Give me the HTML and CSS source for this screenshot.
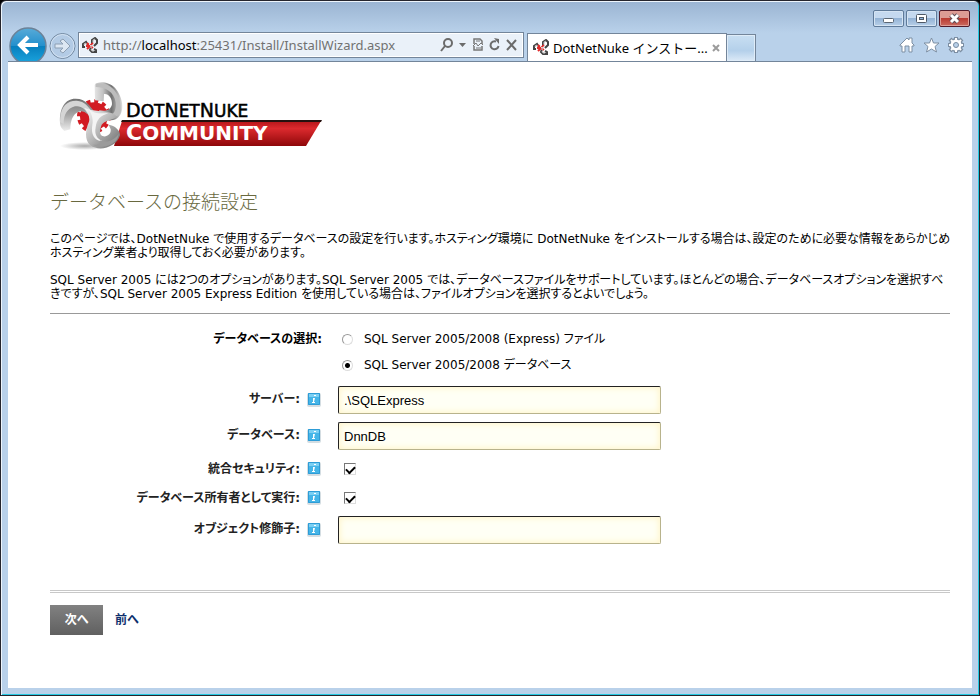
FILE: index.html
```html
<!DOCTYPE html>
<html lang="ja">
<head>
<meta charset="utf-8">
<title>DotNetNuke インストール</title>
<link rel="stylesheet" href="styles.css">
</head>
<body>
<svg class="defs" aria-hidden="true">
  <defs>
    <symbol id="favicon" viewBox="0 0 17 17">
      <path d="M10 7V3L13 1L15 3V6L12 9M6 8L4 5L1 7V10H3M9 10L8 13L10 15H14V13L12 12" fill="none" stroke="#444" stroke-width="2"/>
      <path d="M11 6V3L13 2M5 7L3 6L2 8M9 12L10 14H12" fill="none" stroke="#c4c4c4"/>
      <path d="M5 6L8 9L11 6M5 12L8 9L11 11M4 9H7" stroke="#e22a2a" stroke-width="2" fill="none"/>
      <path d="M7 7L9 9V11M9 9L12 7" stroke="#ddd" fill="none"/>
    </symbol>
    <symbol id="info" viewBox="0 0 14 15">
      <rect y="1" width="14" height="14" rx="2" fill="#d4dde2"/>
      <rect x="1" y="1" width="12" height="12" rx="1" fill="#45b5e8"/>
      <path d="M1 2H13V5H1Z" fill="#7bcff3"/>
      <path d="M1.500 1.500H12.500V12.500H1.500Z" fill="none" stroke="#2e9cd6"/>
      <path d="M7 3H9V4H7ZM6 6H8L7 10H8V11H5V10H6L6 7Z" fill="#fff"/>
    </symbol>
  </defs>
</svg>
<div class="window">
  <header class="chrome">
    <div class="caption">
      <button class="cap" aria-label="最小化"><svg width="29" height="15" viewBox="0 0 29 15"><rect x="9.500" y="7.500" width="10" height="4" rx="1" fill="#fff" stroke="#5b6673"/></svg></button>
      <button class="cap" aria-label="最大化"><svg width="29" height="15" viewBox="0 0 29 15"><rect x="9.500" y="3.500" width="10" height="8" rx="1" fill="#fff" stroke="#4f5966"/><rect x="12.500" y="6.500" width="4" height="2" fill="#8fb4dc" stroke="#4f5966"/></svg></button>
      <button class="cap close" aria-label="閉じる"><svg width="29" height="15" viewBox="0 0 29 15"><path d="M11 4L18 11M18 4L11 11" stroke="#5d4d56" stroke-width="5"/><path d="M11 4L18 11M18 4L11 11" stroke="#fff" stroke-width="3"/></svg></button>
    </div>
    <div class="toolbar">
      <button class="nav" aria-label="戻る"><svg width="38" height="34" viewBox="0 0 38 34"><defs><linearGradient id="back" x2="0" y2="1"><stop stop-color="#58abd8"/><stop offset=".5" stop-color="#238fcc"/><stop offset=".51" stop-color="#077fbe"/><stop offset="1" stop-color="#1ca6df"/></linearGradient></defs><circle cx="19" cy="19" r="18" fill="url(#back)" stroke="#6c8298" stroke-width="1.500"/><path d="M29 18H11M19 10L11 18L19 26" fill="none" stroke="#fff" stroke-width="4"/></svg></button>
      <button class="nav forward" aria-label="進む"><svg width="27" height="28" viewBox="0 0 27 28"><circle cx="13.500" cy="14" r="12.500" fill="#b3cbe5" stroke="#71879f"/><circle cx="13.500" cy="14" r="11.500" fill="none" stroke="#d4e3f3"/><path d="M6 12H14L11 9L14 7L21 14L14 21L11 19L14 16H6Z" fill="#dce7f3" stroke="#8d9fb3"/></svg></button>
      <div class="address">
        <svg width="17" height="17"><use href="#favicon"/></svg>
        <a class="url" href="#">http://<b>localhost</b>:25431/Install/InstallWizard.aspx</a>
        <button class="tool" aria-label="検索"><svg width="28" height="16" viewBox="0 0 28 16"><circle cx="9" cy="6" r="4" fill="none" stroke="#6b6b6b" stroke-width="2"/><path d="M6 9L2 14" stroke="#6b6b6b" stroke-width="2"/><path d="M20 6H27L23.500 10Z" fill="#6b6b6b"/></svg></button>
        <button class="tool" aria-label="互換表示"><svg width="10" height="14" viewBox="0 0 10 14"><path d="M1 6V1H7L9 3V6M1 8V12H9V8" fill="none" stroke="#777" stroke-width="1.500"/><path d="M0 8L3 5L5 8L8 5L10 7M3 3H7M3 10H8" fill="none" stroke="#777"/></svg></button>
        <button class="tool" aria-label="更新"><svg width="11" height="14" viewBox="0 0 11 14"><path d="M7 3.500A4 4 0 1 0 9.500 8" fill="none" stroke="#6b6b6b" stroke-width="2"/><path d="M5 0L10 1V6Z" fill="#6b6b6b"/></svg></button>
        <button class="tool" aria-label="中止"><svg width="11" height="14" viewBox="0 0 11 14"><path d="M1 2L10 12M10 2L1 12" stroke="#6b6b6b" stroke-width="2"/></svg></button>
      </div>
      <div class="tab">
        <svg width="17" height="17"><use href="#favicon"/></svg>
        <span class="tab-title">DotNetNuke インストー...</span>
        <button class="tool" aria-label="タブを閉じる"><svg width="8" height="8" viewBox="0 0 8 8"><path d="M1 1L7 7M7 1L1 7" stroke="#9b9b9b" stroke-width="2"/></svg></button>
      </div>
      <button class="newtab" aria-label="新しいタブ"></button>
      <div class="commands">
        <button class="tool" aria-label="ホーム"><svg width="16" height="16" viewBox="0 0 16 16"><path d="M1 8L8 1L10 3V1H13V6L15 8V9H13V15H10V9H6V15H3V9H1Z" fill="#fff" stroke="#7d8fa3"/></svg></button>
        <button class="tool" aria-label="お気に入り"><svg width="17" height="16" viewBox="0 0 17 16"><path d="M8.500 1L10.500 6H16L12 9.500L13.500 15L8.500 12L3.500 15L5 9.500L1 6H6.500Z" fill="#fff" stroke="#7d8fa3"/></svg></button>
        <button class="tool" aria-label="ツール"><svg width="16" height="16" viewBox="0 0 16 16"><path d="M8 0V16M0 8H16M2 2L14 14M14 2L2 14" stroke="#7d8fa3" stroke-width="4"/><circle cx="8" cy="8" r="5" fill="none" stroke="#7d8fa3" stroke-width="4"/><path d="M8 1V15M1 8H15M3 3L13 13M13 3L3 13" stroke="#fff" stroke-width="2"/><circle cx="8" cy="8" r="4" fill="#b9d1ea" stroke="#fff" stroke-width="3"/><circle cx="8" cy="8" r="2.500" fill="#b9d1ea" stroke="#7d8fa3"/></svg></button>
      </div>
    </div>
  </header>
  <main class="page">
    <svg class="logo" width="275" height="72" viewBox="8 9 275 72" role="img" aria-label="DotNetNuke Community">
      <defs>
        <linearGradient id="band" x2="0" y2="1"><stop stop-color="#b51519"/><stop offset=".3" stop-color="#dc2a2e"/><stop offset="1" stop-color="#8e0709"/></linearGradient>
        <linearGradient id="metal-top" x2="1"><stop stop-color="#e4e4e4"/><stop offset=".3" stop-color="#c2c2c2"/><stop offset=".6" stop-color="#707070"/><stop offset="1" stop-color="#dedede"/></linearGradient>
        <linearGradient id="metal-left" x2="0" y2="1"><stop stop-color="#707070"/><stop offset=".5" stop-color="#a5a5a5"/><stop offset="1" stop-color="#eee"/></linearGradient>
        <linearGradient id="metal-bottom" x2="1" y2="1"><stop stop-color="#fafafa"/><stop offset=".5" stop-color="#b5b5b5"/><stop offset="1" stop-color="#686868"/></linearGradient>
        <radialGradient id="shade"><stop stop-color="#aaa"/><stop offset="1" stop-color="#fff"/></radialGradient>
      </defs>
      <ellipse cx="35" cy="75" rx="25" ry="4" fill="url(#shade)"/>
      <path d="M72 50H271L256 75H64Z" fill="url(#band)"/>
      <path d="M72 49H272L271 51H71Z" fill="#26110f"/>
      <g transform="translate(6 8) scale(.3333)">
        <circle cx="114" cy="112" r="42" fill="#d21b22"/>
        <circle cx="114" cy="112" r="45" fill="none" stroke="#d21b22" stroke-width="12" stroke-dasharray="12 11.500"/>
        <path d="M117 64L116 18C122 6 158 6 178 28C201 54 207 98 187 115C174 130 148 122 125 114L130 94C152 99 165 91 168 76C169 57 157 43 144 45L143 67Z" fill="url(#metal-top)"/>
        <path d="M119 14C165 4 197 48 194 95C193 110 178 117 154 115C175 108 182 90 179 70C174 38 148 24 119 24Z" fill="#bdbdbd"/>
        <path d="M12 132C9 86 29 58 59 59C91 59 102 83 112 94L105 116C93 103 81 92 66 99C49 107 43 128 43 151L25 156C16 148 12 141 12 132Z" fill="url(#metal-left)"/>
        <path d="M13 116C15 82 35 64 62 65C87 66 97 84 109 99L102 113C87 89 76 79 57 82C34 88 23 106 23 135L12 130Z" fill="#d5d5d5"/>
        <path d="M105 93L128 96C142 100 169 96 183 113C167 125 148 123 137 137C130 157 130 169 142 172C155 174 166 164 164 151L158 137C177 139 193 155 192 169C182 204 132 220 103 199C87 187 86 157 99 128C103 113 94 99 85 87Z" fill="url(#metal-bottom)"/>
        <path d="M95 86C109 105 129 103 157 103C134 110 122 121 119 145C115 166 122 179 139 186C115 187 104 165 109 137C113 120 105 99 95 86Z" fill="#f4f4f4"/>
        <path d="M133 184C151 194 179 181 188 164C187 184 171 196 150 202C136 205 120 203 111 197C122 199 135 196 133 184Z" fill="#9b9b9b"/>
      </g>
      <text class="brand" x="76" y="46">D<tspan class="brand-small">OT</tspan>N<tspan class="brand-small">ET</tspan>N<tspan class="brand-small">UKE</tspan></text>
      <text class="edition" x="76" y="69">C<tspan class="edition-small">OMMUNITY</tspan></text>
    </svg>
    <h1>データベースの接続設定</h1>
    <p>このページでは、DotNetNuke で使用するデータベースの設定を行います。ホスティング環境に DotNetNuke をインストールする場合は、設定のために必要な情報をあらかじめ<br>ホスティング業者より取得しておく必要があります。</p>
    <p>SQL Server 2005 には2つのオプションがあります。SQL Server 2005 では、データベースファイルをサポートしています。ほとんどの場合、データベースオプションを選択すべ<br>きですが、SQL Server 2005 Express Edition を使用している場合は、ファイルオプションを選択するとよいでしょう。</p>
    <form>
      <div class="row options" role="radiogroup" aria-labelledby="kind">
        <span class="caption-label" id="kind">データベースの選択:</span>
        <div class="choices">
          <label class="choice"><input type="radio" name="kind">SQL Server 2005/2008 (Express) ファイル</label>
          <label class="choice"><input type="radio" name="kind" checked>SQL Server 2005/2008 データベース</label>
        </div>
      </div>
      <div class="row field"><label for="server">サーバー:<svg width="14" height="15"><use href="#info"/></svg></label><input type="text" id="server" value=".\SQLExpress"></div>
      <div class="row field"><label for="db">データベース:<svg width="14" height="15"><use href="#info"/></svg></label><input type="text" id="db" value="DnnDB"></div>
      <div class="row check"><label for="security">統合セキュリティ:<svg width="14" height="15"><use href="#info"/></svg></label><input type="checkbox" id="security" checked></div>
      <div class="row check"><label for="owner">データベース所有者として実行:<svg width="14" height="15"><use href="#info"/></svg></label><input type="checkbox" id="owner" checked></div>
      <div class="row field"><label for="qualifier">オブジェクト修飾子:<svg width="14" height="15"><use href="#info"/></svg></label><input type="text" id="qualifier"></div>
      <div class="actions">
        <button type="button" class="next">次へ</button>
        <a class="prev" href="#">前へ</a>
      </div>
    </form>
  </main>
</div>
</body>
</html>
```

FILE: styles.css
```css
* { box-sizing: border-box; }

body {
  margin: 0;
  background: #000;
  color: #000;
  font: 12px/14px "DejaVu Sans", "Noto Sans CJK JP", sans-serif;
  font-feature-settings: "palt";
}

button {
  margin: 0;
  padding: 0;
  border: 0;
  background: none;
  font: inherit;
}

svg { display: block; flex: none; }
.defs { position: absolute; width: 0; height: 0; }

.window {
  display: flex;
  flex-direction: column;
  min-height: 100vh;
  padding: 0 6px 6px;
  border: 1px solid #25252d;
  border-radius: 6px 6px 0 0;
  background: linear-gradient(#9ab4d2, #b9d1ea 32px);
  box-shadow: inset 1px 1px #eef5fc, inset -1px -1px #25c9e2;
}

.chrome { padding-top: 9px; }

.caption {
  display: flex;
  justify-content: flex-end;
  gap: 2px;
  padding-right: 3px;
}

.cap {
  width: 31px;
  height: 17px;
  border: 1px solid #5f7a99;
  border-radius: 2px;
  background: linear-gradient(#c5d9ef 50%, #94b3d5 50%, #b8d0e9);
  box-shadow: inset 0 0 0 1px #d5e4f3;
}

.close {
  border-color: #511a29;
  background: linear-gradient(#dc9b94 50%, #ba3b32 50%, #cb6b60);
  box-shadow: inset 0 0 0 1px #df9d96;
}

.toolbar {
  display: flex;
  align-items: flex-end;
  height: 34px;
  padding-left: 2px;
}

.forward { margin: 0 2px 1px; }

.address {
  display: flex;
  align-items: center;
  flex: 0 1 446px;
  height: 26px;
  margin: 0 3px 3px 0;
  padding: 0 6px 0 3px;
  border: 1px solid #73859a;
  background: #eaf1f9;
  box-shadow: inset 0 0 0 1px #fff;
}

.url {
  flex: 1;
  margin-left: 4px;
  color: #717171;
  font: 13px/16px "Noto Sans", sans-serif;
  text-decoration: none;
  white-space: nowrap;
}

.url b { color: #000; font-weight: 400; }
.address .tool + .tool { margin-left: 6px; }

.tab {
  display: flex;
  align-items: center;
  width: 200px;
  height: 28px;
  padding: 0 6px 0 5px;
  border: 1px solid #73859a;
  border-bottom: 0;
  background: #fff;
}

.tab-title {
  flex: 1;
  margin-left: 3px;
  font: 13px/16px "Noto Sans", "Noto Sans CJK JP", sans-serif;
  white-space: nowrap;
}

.newtab {
  width: 29px;
  height: 27px;
  border: solid #73859a;
  border-width: 1px 1px 0 0;
  background: linear-gradient(#c9dff2, #b4d0ea 60%, #dceaf7);
  box-shadow: inset 0 0 0 1px #dfecf8;
}

.commands {
  display: flex;
  align-items: center;
  gap: 8px;
  height: 32px;
  margin-left: auto;
  padding: 0 9px 0 0;
}

.page {
  flex: 1;
  margin: 0 1px 1px;
  padding: 18px 22px 20px 42px;
  border-top: 1px solid #73859a;
  background: #fff;
}

.logo { margin-left: 8px; }

.brand { font: 19px "DejaVu Sans", sans-serif; stroke: #000; stroke-width: .5px; }
.brand-small { font-size: 17px; }
.edition { fill: #fff; font: bold 22px "DejaVu Sans", sans-serif; }
.edition-small { font-size: 20px; }

h1 {
  margin: 36px 0 18px;
  color: #69693f;
  font: 300 19px/26px "Noto Sans CJK JP", sans-serif;
}

p { margin: 0 0 13px; white-space: nowrap; }

form { margin-top: -1px; padding-top: 12px; border-top: 1px solid #999; }

.row {
  display: grid;
  grid-template-columns: 272px 1fr;
  column-gap: 16px;
  align-items: center;
}

.row > label,
.caption-label {
  display: flex;
  align-items: center;
  justify-content: flex-end;
  gap: 7px;
  color: #222;
  font-weight: 700;
}

.row > label { padding: 0 1px 2px 0; }

.options { align-items: start; }
.caption-label { height: 26px; color: #000; }

.choice {
  display: flex;
  align-items: center;
  gap: 11px;
  height: 26px;
  padding-left: 4px;
}

input { margin: 0; }

input[type="radio"] {
  appearance: none;
  width: 11px;
  height: 11px;
  border: 1px solid;
  border-color: #999 #ddd #ddd #999;
  border-radius: 50%;
  background: #fff;
}

input[type="radio"]:checked { background: radial-gradient(#000 2px, #fff 3px); }

.field { height: 36px; }
.options + .field { margin-top: 4px; }

input[type="text"] {
  width: 100%;
  max-width: 323px;
  height: 28px;
  padding: 0 5px;
  border: 1px solid;
  border-color: #222 #b8b38c #b8b38c #222;
  border-radius: 2px;
  background: #fffff5;
  box-shadow: inset 0 0 6px 1px #fff5c9;
  color: #000;
  font: 13px/16px "Liberation Sans", sans-serif;
}

.check { height: 29px; }
.check > label { padding-bottom: 0; }

input[type="checkbox"] {
  appearance: none;
  width: 12px;
  height: 12px;
  margin-left: 6px;
  border: 1px solid;
  border-color: #777 #ddd #ddd #777;
  background: #fff;
}

input[type="checkbox"]:checked::before {
  content: "";
  display: block;
  width: 7px;
  height: 4px;
  margin: 2px 1px;
  border: solid #000;
  border-width: 0 0 2px 2px;
  transform: rotate(-45deg);
}

.actions {
  display: flex;
  align-items: center;
  gap: 12px;
  margin-top: 42px;
  padding-top: 12px;
  border-top: 3px double #c8c8c8;
}

.next {
  width: 53px;
  height: 30px;
  background: linear-gradient(#818181, #606060);
  color: #fff;
  font-weight: 700;
}

.prev { color: #0e2f6d; font-weight: 700; text-decoration: none; }
```
